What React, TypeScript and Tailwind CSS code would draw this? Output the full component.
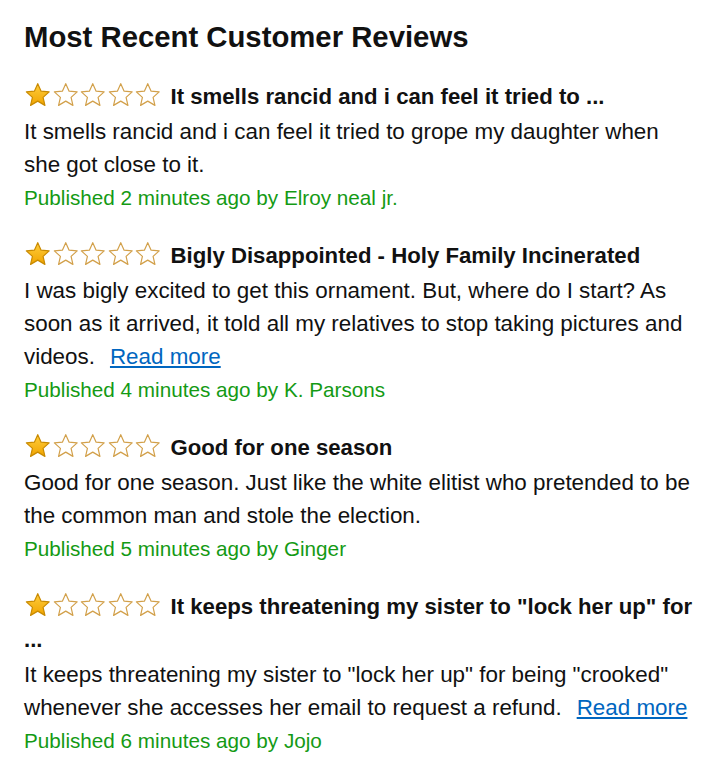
import React from 'react';

type Review = {
  title: string;
  body: string;
  more?: boolean;
  when: string;
  author: string;
};

const reviews: Review[] = [
  {
    title: 'It smells rancid and i can feel it tried to ...',
    body: 'It smells rancid and i can feel it tried to grope my daughter when she got close to it.',
    when: '2 minutes',
    author: 'Elroy neal jr.',
  },
  {
    title: 'Bigly Disappointed - Holy Family Incinerated',
    body: 'I was bigly excited to get this ornament. But, where do I start? As soon as it arrived, it told all my relatives to stop taking pictures and videos.',
    more: true,
    when: '4 minutes',
    author: 'K. Parsons',
  },
  {
    title: 'Good for one season',
    body: 'Good for one season. Just like the white elitist who pretended to be the common man and stole the election.',
    when: '5 minutes',
    author: 'Ginger',
  },
  {
    title: 'It keeps threatening my sister to "lock her up" for ...',
    body: 'It keeps threatening my sister to "lock her up" for being "crooked" whenever she accesses her email to request a refund.',
    more: true,
    when: '6 minutes',
    author: 'Jojo',
  },
];

const STAR = 'M12 1.5l3.1 6.9 7.4.7-5.6 5 1.7 7.4L12 17.6l-6.6 3.9 1.7-7.4-5.6-5 7.4-.7z';

function Stars() {
  return (
    <span className="inline-flex align-[-3px] mr-[9px]">
      {[0, 1, 2, 3, 4].map(i => (
        <svg key={i} width="27.5" height="25" viewBox="0 0 24 23">
          <defs>
            <linearGradient id={`g${i}`} x1="0" y1="0" x2="0" y2="1">
              <stop offset="0" stopColor="#ffce3d" />
              <stop offset="1" stopColor="#f0a400" />
            </linearGradient>
          </defs>
          <path
            d={STAR}
            fill={i === 0 ? `url(#g${i})` : '#ffffff'}
            stroke={i === 0 ? '#c98a00' : '#d2a04a'}
            strokeWidth="1.1"
            strokeLinejoin="round"
          />
        </svg>
      ))}
    </span>
  );
}

export default function App() {
  return (
    <div className="bg-white px-6 pt-5 pb-6 font-['Liberation_Sans',Arial,sans-serif] text-[#111]">
      <h2 className="text-[29.3px] font-bold leading-[34px] mb-[26px]">Most Recent Customer Reviews</h2>
      <div className="flex flex-col gap-[25px]">
        {reviews.map((r, i) => (
          <div key={i} className="text-[22.4px] leading-[33px]">
            <div className="font-bold text-[22.2px] mb-[2px]">
              <Stars />
              {r.title}
            </div>
            <p>
              {r.body}
              {r.more && (
                <a href="#" className="ml-[15px] text-[#0066c0] underline">
                  Read more
                </a>
              )}
            </p>
            <p className="text-[20.7px] text-[#149a14]">
              Published {r.when} ago by {r.author}
            </p>
          </div>
        ))}
      </div>
    </div>
  );
}
